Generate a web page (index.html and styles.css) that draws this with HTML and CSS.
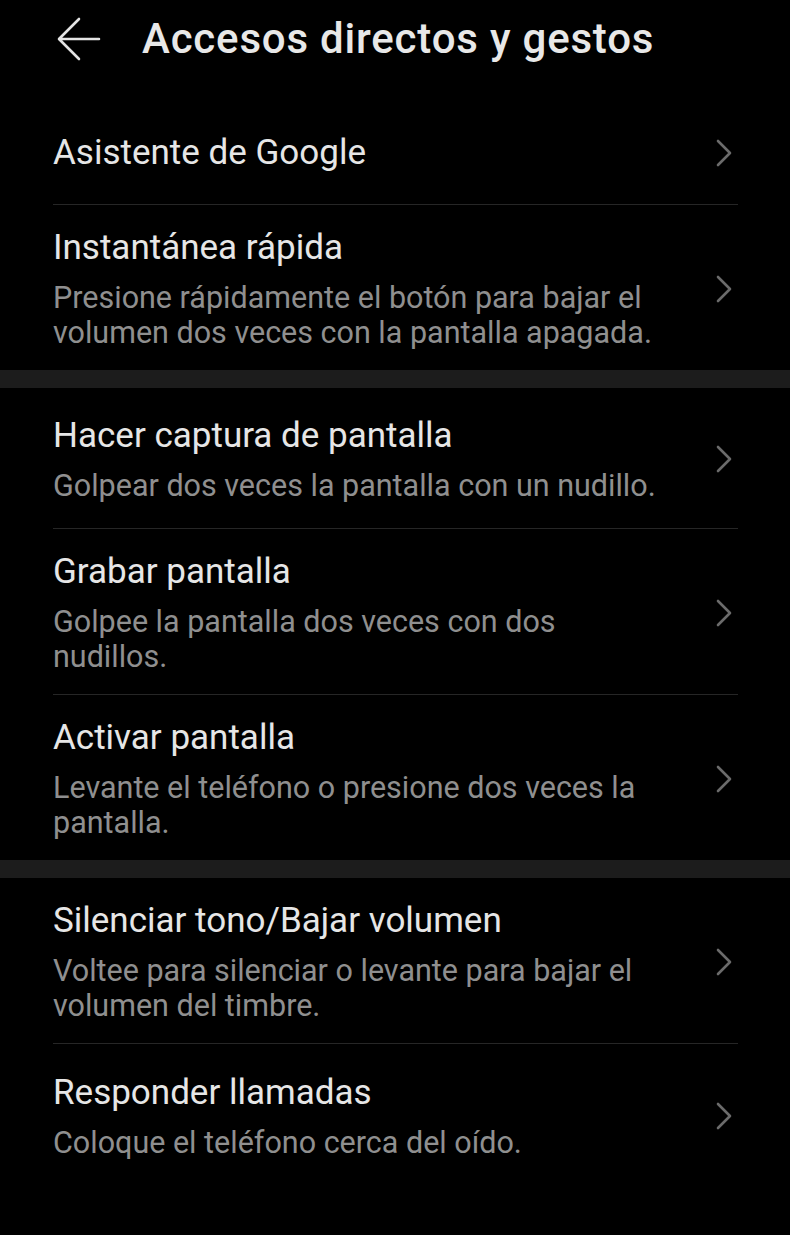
FILE: index.html
```html
<!DOCTYPE html>
<html lang="es">
<head>
<meta charset="utf-8">
<title>Accesos directos y gestos</title>
<link rel="stylesheet" href="styles.css">
</head>
<body>
<header class="appbar">
  <svg class="back" viewBox="0 0 44 44" width="44" height="44" aria-hidden="true">
    <path d="M42 22H3M22 2L2 22l20 20" fill="none" stroke="#e4e4e4" stroke-width="2.6" stroke-linecap="round" stroke-linejoin="round"/>
  </svg>
  <h1 class="appbar-title">Accesos directos y gestos</h1>
</header>

<section class="group">
  <div class="row row-first">
    <div class="row-text"><div class="row-title">Asistente de Google</div></div>
    <svg class="chev" viewBox="0 0 16 28" width="16" height="28"><path d="M2 2l12 12L2 26" fill="none" stroke="#6b6b6b" stroke-width="2.6" stroke-linecap="round" stroke-linejoin="round"/></svg>
  </div>
  <div class="row">
    <div class="row-text">
      <div class="row-title">Instantánea rápida</div>
      <div class="row-sub">Presione rápidamente el botón para bajar el volumen dos veces con la pantalla apagada.</div>
    </div>
    <svg class="chev" viewBox="0 0 16 28" width="16" height="28"><path d="M2 2l12 12L2 26" fill="none" stroke="#6b6b6b" stroke-width="2.6" stroke-linecap="round" stroke-linejoin="round"/></svg>
  </div>
</section>

<div class="sep"></div>

<section class="group">
  <div class="row">
    <div class="row-text">
      <div class="row-title">Hacer captura de pantalla</div>
      <div class="row-sub">Golpear dos veces la pantalla con un nudillo.</div>
    </div>
    <svg class="chev" viewBox="0 0 16 28" width="16" height="28"><path d="M2 2l12 12L2 26" fill="none" stroke="#6b6b6b" stroke-width="2.6" stroke-linecap="round" stroke-linejoin="round"/></svg>
  </div>
  <div class="row">
    <div class="row-text">
      <div class="row-title">Grabar pantalla</div>
      <div class="row-sub">Golpee la pantalla dos veces con dos nudillos.</div>
    </div>
    <svg class="chev" viewBox="0 0 16 28" width="16" height="28"><path d="M2 2l12 12L2 26" fill="none" stroke="#6b6b6b" stroke-width="2.6" stroke-linecap="round" stroke-linejoin="round"/></svg>
  </div>
  <div class="row">
    <div class="row-text">
      <div class="row-title">Activar pantalla</div>
      <div class="row-sub">Levante el teléfono o presione dos veces la pantalla.</div>
    </div>
    <svg class="chev" viewBox="0 0 16 28" width="16" height="28"><path d="M2 2l12 12L2 26" fill="none" stroke="#6b6b6b" stroke-width="2.6" stroke-linecap="round" stroke-linejoin="round"/></svg>
  </div>
</section>

<div class="sep"></div>

<section class="group">
  <div class="row">
    <div class="row-text">
      <div class="row-title">Silenciar tono/Bajar volumen</div>
      <div class="row-sub">Voltee para silenciar o levante para bajar el volumen del timbre.</div>
    </div>
    <svg class="chev" viewBox="0 0 16 28" width="16" height="28"><path d="M2 2l12 12L2 26" fill="none" stroke="#6b6b6b" stroke-width="2.6" stroke-linecap="round" stroke-linejoin="round"/></svg>
  </div>
  <div class="row">
    <div class="row-text">
      <div class="row-title">Responder llamadas</div>
      <div class="row-sub">Coloque el teléfono cerca del oído.</div>
    </div>
    <svg class="chev" viewBox="0 0 16 28" width="16" height="28"><path d="M2 2l12 12L2 26" fill="none" stroke="#6b6b6b" stroke-width="2.6" stroke-linecap="round" stroke-linejoin="round"/></svg>
  </div>
</section>
</body>
</html>
```

FILE: styles.css
```css
* { box-sizing: border-box; }
html, body {
  margin: 0;
  padding: 0;
  background: #000;
}
body {
  font-family: Roboto, "Noto Sans", "Liberation Sans", sans-serif;
  color: #e6e6e6;
  width: 790px;
  min-height: 1235px;
}
.appbar {
  display: flex;
  align-items: center;
  height: 100px;
  padding: 0 0 22px 57px;
}
.back {
  flex: none;
  display: block;
}
.appbar-title {
  margin: 0 0 0 41px;
  font-size: 42px;
  font-weight: 500;
  letter-spacing: 0.8px;
  color: #e8e8e8;
  line-height: 50px;
  white-space: nowrap;
}
.group {
  margin: 0 52px 0 53px;
}
.row {
  display: flex;
  align-items: center;
  min-height: 141px;
  padding: 22px 6px 20px 0;
  border-bottom: 1px solid #262626;
}
.row:last-child {
  border-bottom: none;
}
.row-first {
  min-height: 105px;
}
.row-text {
  flex: 1;
  min-width: 0;
  padding-right: 46px;
}
.row-title {
  font-size: 35px;
  line-height: 42px;
  color: #e6e6e6;
}
.row-sub {
  margin-top: 11px;
  font-size: 30.5px;
  line-height: 35px;
  color: #8f8f8f;
}
.chev {
  flex: none;
  display: block;
}
.sep {
  height: 18px;
  background: #1c1c1c;
}
```
